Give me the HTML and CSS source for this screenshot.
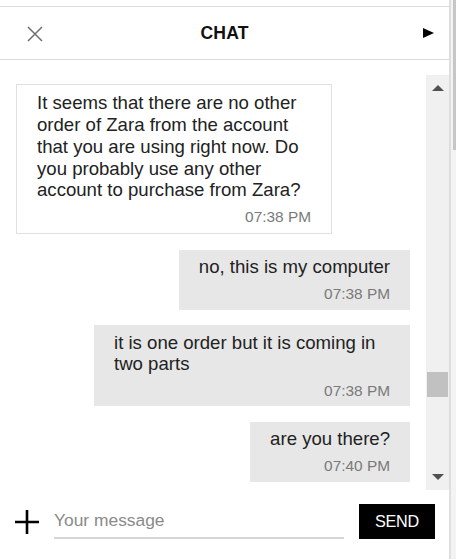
FILE: index.html
```html
<!DOCTYPE html>
<html lang="en">
<head>
<meta charset="utf-8">
<title>Chat</title>
<link rel="stylesheet" href="styles.css">
</head>
<body>
<div class="page">
  <div class="panel">
    <header class="chat-header">
      <button class="icon-btn close-btn" aria-label="Close">
        <svg width="16" height="16" viewBox="0 0 16 16"><path d="M1 1 L15 15 M15 1 L1 15" stroke="#6e6e6e" stroke-width="1.5" fill="none"/></svg>
      </button>
      <h1 class="title">CHAT</h1>
      <button class="icon-btn play-btn" aria-label="Expand">
        <svg width="11" height="10" viewBox="0 0 11 10"><path d="M0 0 L11 5 L0 10 Z" fill="#000"/></svg>
      </button>
    </header>

    <div class="chat-body">
      <div class="messages">
        <div class="bubble agent">
          <p class="msg-text">It seems that there are no other order of Zara from the account that you are using right now. Do you probably use any other account to purchase from Zara?</p>
          <div class="time">07:38 PM</div>
        </div>
        <div class="bubble user">
          <p class="msg-text">no, this is my computer</p>
          <div class="time">07:38 PM</div>
        </div>
        <div class="bubble user">
          <p class="msg-text">it is one order but it is coming in two parts</p>
          <div class="time">07:38 PM</div>
        </div>
        <div class="bubble user">
          <p class="msg-text">are you there?</p>
          <div class="time">07:40 PM</div>
        </div>
      </div>
      <div class="scrollbar">
        <div class="sb-btn"><span class="arrow-up"></span></div>
        <div class="sb-track"><div class="sb-thumb"></div></div>
        <div class="sb-btn"><span class="arrow-down"></span></div>
      </div>
    </div>

    <footer class="composer">
      <button class="icon-btn plus-btn" aria-label="Attach">
        <svg width="24" height="24" viewBox="0 0 24 24"><path d="M12 0 V24 M0 12 H24" stroke="#000" stroke-width="2.6" fill="none"/></svg>
      </button>
      <input class="msg-input" type="text" placeholder="Your message">
      <button class="send-btn">SEND</button>
    </footer>
  </div>
  <div class="page-scroll"><div class="page-thumb"></div></div>
</div>
</body>
</html>
```

FILE: styles.css
```css
* { box-sizing: border-box; }

html, body {
  margin: 0;
  padding: 0;
  background: #fff;
}

body {
  font-family: "Liberation Sans", Arial, sans-serif;
  color: #222;
  width: 456px;
  height: 559px;
  overflow: hidden;
}

.page {
  display: flex;
  height: 559px;
}

.panel {
  width: 451px;
  height: 559px;
  border-right: 2px solid #dedede;
  padding-top: 6px;
  display: flex;
  flex-direction: column;
}

.page-scroll {
  width: 5px;
  height: 559px;
  background: #f3f3f3;
  padding-left: 2px;
}

.page-thumb {
  width: 3px;
  height: 150px;
  background: #c6c6c6;
}

.icon-btn {
  border: 0;
  background: none;
  padding: 0;
  margin: 0;
  display: flex;
  align-items: center;
  justify-content: center;
  cursor: pointer;
}

/* Header */
.chat-header {
  height: 54px;
  border-top: 1px solid #dcdcdc;
  border-bottom: 1px solid #dcdcdc;
  display: grid;
  grid-template-columns: 1fr auto 1fr;
  align-items: center;
  padding: 0 15px;
}

.close-btn { justify-self: start; margin: 2px 0 0 12px; }
.play-btn { justify-self: end; margin-top: -1px; }

.title {
  margin: 0;
  font-size: 17.6px;
  font-weight: 700;
  color: #111;
  letter-spacing: 0.1px;
}

/* Body */
.chat-body {
  height: 430px;
  padding-top: 15px;
  display: flex;
}

.messages {
  flex: 1;
  overflow: hidden;
  padding: 9px 16px 0 16px;
  display: flex;
  flex-direction: column;
  gap: 15.5px;
}

.bubble {
  max-width: 316px;
  padding: 6.5px 20px;
  flex-shrink: 0;
}

.bubble.agent {
  align-self: flex-start;
  width: 316px;
  border: 1px solid #e0e0e0;
  padding: 7.4px 20px;
  background: #fff;
}

.bubble.user {
  align-self: flex-end;
  background: #e7e7e7;
}

.msg-text {
  margin: 0;
  font-size: 18.6px;
  line-height: 21.7px;
  color: #222;
}

.time {
  margin-top: 7px;
  text-align: right;
  font-size: 15.4px;
  color: #7a7a7a;
}

/* Scrollbar */
.scrollbar {
  width: 23px;
  background: #f0f0f0;
  display: flex;
  flex-direction: column;
}

.sb-btn {
  height: 26px;
  display: flex;
  align-items: center;
  justify-content: center;
}

.arrow-up {
  width: 0;
  height: 0;
  border-left: 6px solid transparent;
  border-right: 6px solid transparent;
  border-bottom: 6px solid #505050;
}

.arrow-down {
  width: 0;
  height: 0;
  border-left: 6px solid transparent;
  border-right: 6px solid transparent;
  border-top: 6px solid #505050;
}

.sb-track {
  flex: 1;
  padding: 0 1px;
}

.sb-thumb {
  margin-top: 271px;
  height: 25px;
  background: #c1c1c1;
}

/* Composer */
.composer {
  flex: 1;
  display: flex;
  align-items: center;
  align-self: stretch;
  padding: 0 0 6px 15px;
}

.plus-btn { width: 24px; height: 24px; }

.msg-input {
  margin-left: 15px;
  width: 290px;
  height: 35px;
  border: 0;
  border-bottom: 2px solid #d6d6d6;
  outline: none;
  padding: 0;
  font-family: "Liberation Sans", Arial, sans-serif;
  font-size: 17.4px;
  color: #222;
  background: transparent;
}

.msg-input::placeholder { color: #8a8a8a; }

.send-btn {
  margin-left: 15px;
  width: 76px;
  height: 35px;
  background: #000;
  color: #fff;
  border: 0;
  font-family: "Liberation Sans", Arial, sans-serif;
  font-size: 16.2px;
  letter-spacing: -0.2px;
  padding: 0;
}
```
